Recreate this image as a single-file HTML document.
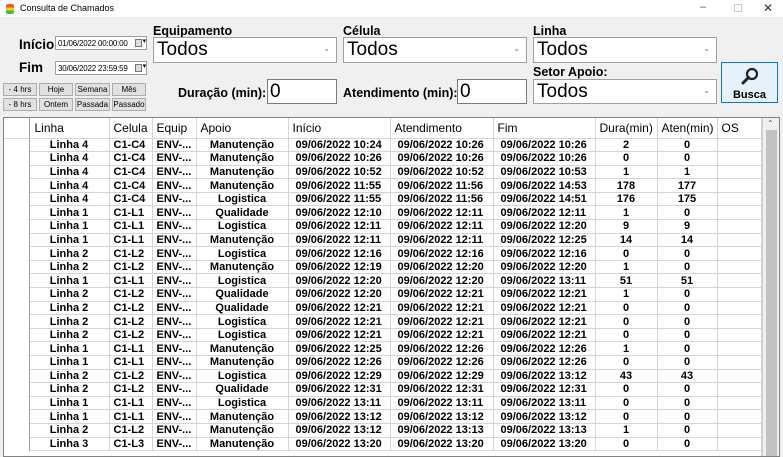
<!DOCTYPE html>
<html><head><meta charset="utf-8">
<style>
*{box-sizing:border-box;margin:0;padding:0}
body{width:783px;height:450px;overflow:hidden;background:#f0f0f0;font-family:"Liberation Sans",Arial,sans-serif;position:relative;color:#000}
.a{position:absolute}
.title{left:0;top:0;width:783px;height:18px;background:#fff;border-bottom:1px solid #e6e6e6}
.lbl{font-weight:bold;font-size:13.5px;line-height:15px}
.lbl2{font-weight:bold;font-size:12.5px;line-height:14px}
.dp{background:#fff;border:1px solid #a0a0a0;font-size:8px;padding:2px 0 0 2px;letter-spacing:-0.2px}
.dp i{position:absolute;right:4px;top:2px;width:7px;height:8px;border:1px solid #777;background:#ddd}
.dp b{position:absolute;right:0px;top:0px;font-size:7px;font-weight:normal}
.btn{background:#e1e1e1;border:1px solid #adadad;font-size:8px;text-align:center;line-height:11px}
.cb{background:#fff;border:1px solid #a0a0a0;font-size:19px;padding:1px 0 0 3px}
.cb span{position:absolute;right:6px;top:6px;font-size:8px;color:#777}
.tb{background:#fff;border:1px solid #7a7a7a;font-size:19px;padding:1px 0 0 2px}
.grid{left:3px;top:117px;width:777px;height:340px;background:#fff;border:1px solid #828282;overflow:hidden}
table{border-collapse:collapse;position:absolute;left:0;top:0;table-layout:fixed}
td{height:13.6px;font-size:11px;font-weight:bold;border-right:1px solid #d5d5d5;border-bottom:1px solid #d5d5d5;white-space:nowrap;overflow:hidden;line-height:12px;padding:0}
tr.h td{height:20px;font-weight:normal;font-size:12px;padding-left:4px;text-align:left}
td.rh{border-bottom:none;border-right:1px solid #a0a0a0}
td.c{text-align:center}
td.l{padding-left:4px}
td.d{padding-left:7px}
</style></head><body>
<div class="a title">
  <div class="a" style="left:6px;top:4px;width:8px;height:10px;border-radius:2px;background:linear-gradient(#e53 0 33%,#fc0 33% 66%,#4b4 66%)"></div>
  <div class="a" style="left:20px;top:3px;font-size:9px">Consulta de Chamados</div>
  <div class="a" style="left:700px;top:1px;font-size:11px;color:#555">–</div>
  <div class="a" style="left:734px;top:4px;width:8px;height:8px;border:1px solid #ccc"></div>
  <div class="a" style="left:763px;top:1px;font-size:12px;color:#333">✕</div>
</div>

<div class="a lbl" style="left:19px;top:37px">Início</div>
<div class="a lbl" style="left:19px;top:60px">Fim</div>
<div class="a dp" style="left:55px;top:36px;width:92px;height:14px">01/06/2022 00:00:00<i></i><b>▾</b></div>
<div class="a dp" style="left:55px;top:61px;width:92px;height:14px">30/06/2022 23:59:59<i></i><b>▾</b></div>

<div class="a btn" style="left:3px;top:83px;width:34px;height:13px">- 4 hrs</div>
<div class="a btn" style="left:39px;top:83px;width:34px;height:13px">Hoje</div>
<div class="a btn" style="left:75px;top:83px;width:35px;height:13px">Semana</div>
<div class="a btn" style="left:112px;top:83px;width:34px;height:13px">Mês</div>
<div class="a btn" style="left:3px;top:98px;width:34px;height:13px">- 8 hrs</div>
<div class="a btn" style="left:39px;top:98px;width:34px;height:13px">Ontem</div>
<div class="a btn" style="left:75px;top:98px;width:35px;height:13px">Passada</div>
<div class="a btn" style="left:112px;top:98px;width:34px;height:13px">Passado</div>

<div class="a lbl2" style="left:153px;top:24px">Equipamento</div>
<div class="a cb" style="left:153px;top:37px;width:184px;height:26px">Todos<span>⌄</span></div>
<div class="a lbl2" style="left:343px;top:24px">Célula</div>
<div class="a cb" style="left:343px;top:37px;width:184px;height:26px">Todos<span>⌄</span></div>
<div class="a lbl2" style="left:533px;top:24px">Linha</div>
<div class="a cb" style="left:533px;top:37px;width:184px;height:26px">Todos<span>⌄</span></div>

<div class="a lbl2" style="left:178px;top:86px">Duração (min):</div>
<div class="a tb" style="left:267px;top:79px;width:70px;height:25px">0</div>
<div class="a lbl2" style="left:343px;top:86px">Atendimento (min):</div>
<div class="a tb" style="left:457px;top:79px;width:70px;height:25px">0</div>
<div class="a lbl2" style="left:533px;top:65px">Setor Apoio:</div>
<div class="a cb" style="left:533px;top:79px;width:184px;height:25px">Todos<span>⌄</span></div>

<div class="a" style="left:721px;top:62px;width:57px;height:41px;background:#e5f1fb;border:1px solid #0078d7">
  <svg class="a" style="left:19px;top:4px" width="18" height="18" viewBox="0 0 18 18"><circle cx="11" cy="7" r="5" fill="none" stroke="#222" stroke-width="2.2"/><line x1="7.5" y1="10.5" x2="2" y2="16" stroke="#222" stroke-width="3" stroke-linecap="round"/></svg>
  <div class="a" style="left:0;width:55px;top:26px;text-align:center;font-size:11px;font-weight:bold">Busca</div>
</div>

<div class="a grid">
<table>
<colgroup><col style="width:25px"><col style="width:80px"><col style="width:43px"><col style="width:44px"><col style="width:92px"><col style="width:102px"><col style="width:103px"><col style="width:102px"><col style="width:62px"><col style="width:60px"><col style="width:44px"></colgroup>
<tr class="h"><td class="rh" style="border-bottom:1px solid #d5d5d5"></td><td style="padding-left:5px">Linha</td><td>Celula</td><td>Equip</td><td>Apoio</td><td>Início</td><td>Atendimento</td><td>Fim</td><td>Dura(min)</td><td>Aten(min)</td><td>OS</td></tr>
<tbody id="b"></tbody>
</table>
<div class="a" style="left:757px;top:0;width:2px;height:340px;background:#d0d0d0"></div>
<div class="a" style="left:759px;top:0;width:17px;height:340px;background:#f0f0f0"></div>
<div class="a" style="left:763px;top:1px;font-size:8px;color:#555">⌃</div>
<div class="a" style="left:762px;top:12px;width:11px;height:328px;background:#c2c2c2"></div>
</div>
<script>
var r=[
["Linha 4","C1-C4","Manutenção","10:24","10:26","10:26",2,0],
["Linha 4","C1-C4","Manutenção","10:26","10:26","10:26",0,0],
["Linha 4","C1-C4","Manutenção","10:52","10:52","10:53",1,1],
["Linha 4","C1-C4","Manutenção","11:55","11:56","14:53",178,177],
["Linha 4","C1-C4","Logistica","11:55","11:56","14:51",176,175],
["Linha 1","C1-L1","Qualidade","12:10","12:11","12:11",1,0],
["Linha 1","C1-L1","Logistica","12:11","12:11","12:20",9,9],
["Linha 1","C1-L1","Manutenção","12:11","12:11","12:25",14,14],
["Linha 2","C1-L2","Logistica","12:16","12:16","12:16",0,0],
["Linha 2","C1-L2","Manutenção","12:19","12:20","12:20",1,0],
["Linha 1","C1-L1","Logistica","12:20","12:20","13:11",51,51],
["Linha 2","C1-L2","Qualidade","12:20","12:21","12:21",1,0],
["Linha 2","C1-L2","Qualidade","12:21","12:21","12:21",0,0],
["Linha 2","C1-L2","Logistica","12:21","12:21","12:21",0,0],
["Linha 2","C1-L2","Logistica","12:21","12:21","12:21",0,0],
["Linha 1","C1-L1","Manutenção","12:25","12:26","12:26",1,0],
["Linha 1","C1-L1","Manutenção","12:26","12:26","12:26",0,0],
["Linha 2","C1-L2","Logistica","12:29","12:29","13:12",43,43],
["Linha 2","C1-L2","Qualidade","12:31","12:31","12:31",0,0],
["Linha 1","C1-L1","Logistica","13:11","13:11","13:11",0,0],
["Linha 1","C1-L1","Manutenção","13:12","13:12","13:12",0,0],
["Linha 2","C1-L2","Manutenção","13:12","13:13","13:13",1,0],
["Linha 3","C1-L3","Manutenção","13:20","13:20","13:20",0,0]];
var h="",D="09/06/2022 ";
r.forEach(function(x){h+='<tr><td class="rh"></td><td class="c">'+x[0]+'</td><td class="l">'+x[1]+'</td><td class="l">ENV-...</td><td class="c">'+x[2]+'</td><td class="d">'+D+x[3]+'</td><td class="d">'+D+x[4]+'</td><td class="d">'+D+x[5]+'</td><td class="c">'+x[6]+'</td><td class="c">'+x[7]+'</td><td></td></tr>';});
document.getElementById("b").innerHTML=h;
</script>
</body></html>
